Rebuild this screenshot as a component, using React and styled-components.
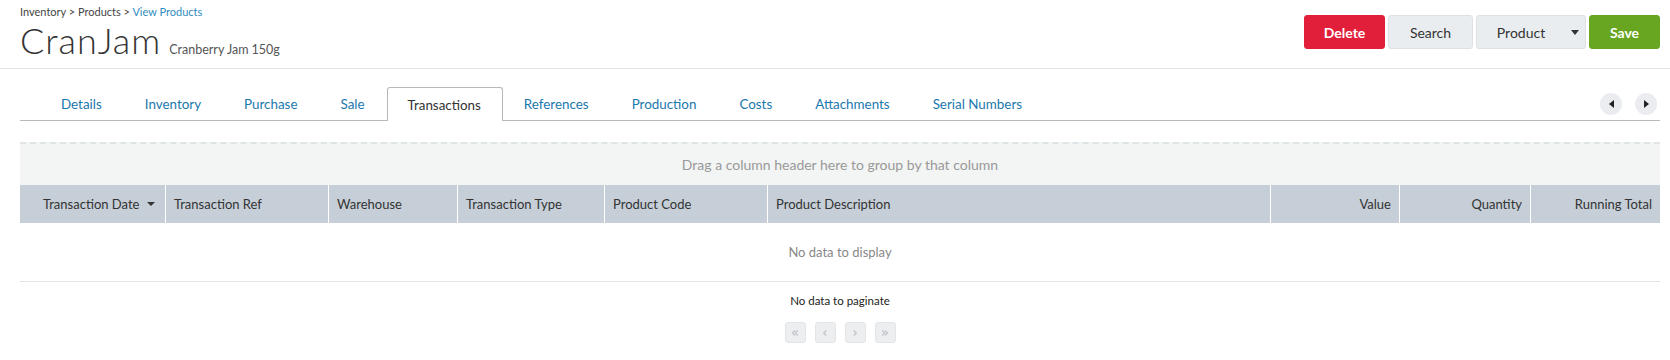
import React from "react";
import styled, { createGlobalStyle } from "styled-components";

const Global = createGlobalStyle`
  html, body { margin: 0; padding: 0; background: #fff; }
  body { font-family: Lato, "Open Sans", Arial, sans-serif; color: #333; }
  * { box-sizing: border-box; }
`;

const Header = styled.header`
  display: flex;
  justify-content: space-between;
  height: 69px;
  padding: 0 10px 0 20px;
  border-bottom: 1px solid #e0e5e9;
`;

const TitleBlock = styled.div`
  display: flex;
  flex-direction: column;
`;

const Crumbs = styled.div`
  margin-top: 5px;
  font-size: 11px;
  line-height: 14px;
  color: #444;
`;

const CrumbLink = styled.span`
  color: ${(p) => (p.$active ? "#2f8cc0" : "#444")};
`;

const TitleRow = styled.div`
  display: flex;
  align-items: baseline;
  gap: 8px;
  margin-top: 1px;
`;

const Title = styled.h1`
  margin: 0;
  font-size: 36px;
  font-weight: 300;
  line-height: 40px;
  color: #333;
  letter-spacing: 1px;
`;

const Subtitle = styled.span`
  font-size: 12.5px;
  color: #555;
`;

const Actions = styled.div`
  display: flex;
  gap: 3px;
  margin-top: 15px;
  height: 34px;
`;

const variants = {
  danger: { bg: "#e11f3b", border: "#e11f3b", color: "#fff", weight: 700 },
  success: { bg: "#68a520", border: "#68a520", color: "#fff", weight: 700 },
  default: { bg: "#eaedf0", border: "#dde1e5", color: "#333", weight: 400 },
};

const Button = styled.button`
  display: flex;
  align-items: center;
  justify-content: center;
  gap: 26px;
  height: 34px;
  width: ${(p) => p.$w}px;
  padding: 0;
  border-radius: 3px;
  border: 1px solid ${(p) => variants[p.$variant].border};
  background: ${(p) => variants[p.$variant].bg};
  color: ${(p) => variants[p.$variant].color};
  font-family: inherit;
  font-size: 14px;
  font-weight: ${(p) => variants[p.$variant].weight};
`;

const ButtonLabel = styled.span`
  margin-left: ${(p) => p.$shift || 0}px;
`;

const Caret = styled.span`
  width: 0;
  height: 0;
  border-left: 4px solid transparent;
  border-right: 4px solid transparent;
  border-top: 5px solid #333;
`;

const Main = styled.main`
  padding: 19px 10px 0 20px;
`;

const TabBar = styled.div`
  display: flex;
  align-items: flex-end;
  height: 33px;
  border-bottom: 1px solid #b8b8b8;
  padding-left: 20px;
`;

const Tab = styled.div`
  padding: 0 21px 0 20px;
  display: flex;
  align-items: center;
  font-size: 13.4px;
  color: ${(p) => (p.$active ? "#333" : "#1b78ad")};
  background: ${(p) => (p.$active ? "#fff" : "transparent")};
  border: 1px solid ${(p) => (p.$active ? "#b8b8b8" : "transparent")};
  border-bottom: none;
  border-radius: 3px 3px 0 0;
  margin-bottom: ${(p) => (p.$active ? "-1px" : "0")};
  height: ${(p) => (p.$active ? "34px" : "33px")};
`;

const Scrollers = styled.div`
  margin-left: auto;
  align-self: center;
  display: flex;
  gap: 13px;
  padding-right: 3px;
`;

const RoundBtn = styled.div`
  width: 22px;
  height: 22px;
  border-radius: 50%;
  background: #eaecef;
  display: flex;
  align-items: center;
  justify-content: center;
`;

const Tri = styled.span`
  width: 0;
  height: 0;
  border-top: 4px solid transparent;
  border-bottom: 4px solid transparent;
  ${(p) => (p.$dir === "left" ? "border-right: 5px solid #222;" : "border-left: 5px solid #222;")}
`;

const Grid = styled.div`
  margin-top: 21px;
`;

const GroupPanel = styled.div`
  height: 43px;
  border-top: 2px dashed #dfe4e7;
  background: #f3f4f4;
  display: flex;
  align-items: center;
  justify-content: center;
  font-size: 14px;
  color: #999;
`;

const cols = "145px 163px 129px 147px 163px 503px 129px 131px 130px";

const HeadRow = styled.div`
  display: grid;
  grid-template-columns: ${cols};
  height: 38px;
  background: #c6cfd7;
`;

const HeadCell = styled.div`
  display: flex;
  align-items: center;
  justify-content: ${(p) => (p.$right ? "flex-end" : "flex-start")};
  gap: 8px;
  padding: 0 8px 0 ${(p) => (p.$indent ? 22 : 8)}px;
  font-size: 13px;
  color: #333;
  white-space: nowrap;
  border-left: 1px solid ${(p) => (p.$first ? "transparent" : "#fff")};
`;

const SortCaret = styled.span`
  width: 0;
  height: 0;
  border-left: 4px solid transparent;
  border-right: 4px solid transparent;
  border-top: 4px solid #333;
`;

const EmptyRow = styled.div`
  height: 59px;
  border-bottom: 1px solid #dfe4e8;
  display: flex;
  align-items: center;
  justify-content: center;
  font-size: 13px;
  color: #888;
`;

const Pager = styled.div`
  display: flex;
  flex-direction: column;
  align-items: center;
`;

const PagerText = styled.div`
  margin-top: 12px;
  font-size: 11.5px;
  line-height: 14px;
  color: #222;
`;

const PagerButtons = styled.div`
  display: flex;
  gap: 9px;
  margin-top: 14px;
`;

const PageBtn = styled.div`
  width: 21px;
  height: 21px;
  border-radius: 3px;
  background: #eceef0;
  border: 1px solid #e2e5e8;
  display: flex;
  align-items: center;
  justify-content: center;
`;

const Chevron = ({ d }) => (
  <svg width="10" height="10" viewBox="0 0 10 10" fill="none" stroke="#bfc4c9" strokeWidth="1.2">
    <path d={d} />
  </svg>
);

const tabs = [
  "Details",
  "Inventory",
  "Purchase",
  "Sale",
  "Transactions",
  "References",
  "Production",
  "Costs",
  "Attachments",
  "Serial Numbers",
];

const headers = [
  { label: "Transaction Date", indent: true, sort: true },
  { label: "Transaction Ref" },
  { label: "Warehouse" },
  { label: "Transaction Type" },
  { label: "Product Code" },
  { label: "Product Description" },
  { label: "Value", right: true },
  { label: "Quantity", right: true },
  { label: "Running Total", right: true },
];

export default function App() {
  return (
    <>
      <Global />
      <Header>
        <TitleBlock>
          <Crumbs>
            <CrumbLink>Inventory</CrumbLink> &gt; <CrumbLink>Products</CrumbLink> &gt;{" "}
            <CrumbLink $active>View Products</CrumbLink>
          </Crumbs>
          <TitleRow>
            <Title>CranJam</Title>
            <Subtitle>Cranberry Jam 150g</Subtitle>
          </TitleRow>
        </TitleBlock>
        <Actions>
          <Button $variant="danger" $w={81}>Delete</Button>
          <Button $variant="default" $w={85}>Search</Button>
          <Button $variant="default" $w={110}>
            <ButtonLabel $shift={14}>Product</ButtonLabel>
            <Caret />
          </Button>
          <Button $variant="success" $w={71}>Save</Button>
        </Actions>
      </Header>
      <Main>
        <TabBar>
          {tabs.map((t) => (
            <Tab key={t} $active={t === "Transactions"}>
              {t}
            </Tab>
          ))}
          <Scrollers>
            <RoundBtn>
              <Tri $dir="left" />
            </RoundBtn>
            <RoundBtn>
              <Tri $dir="right" />
            </RoundBtn>
          </Scrollers>
        </TabBar>
        <Grid>
          <GroupPanel>Drag a column header here to group by that column</GroupPanel>
          <HeadRow>
            {headers.map((h, i) => (
              <HeadCell key={h.label} $first={i === 0} $indent={h.indent} $right={h.right}>
                {h.label}
                {h.sort && <SortCaret />}
              </HeadCell>
            ))}
          </HeadRow>
          <EmptyRow>No data to display</EmptyRow>
        </Grid>
        <Pager>
          <PagerText>No data to paginate</PagerText>
          <PagerButtons>
            <PageBtn><Chevron d="M5 2.5 2.5 5 5 7.5M7.8 2.5 5.3 5 7.8 7.5" /></PageBtn>
            <PageBtn><Chevron d="M6.2 2.5 3.7 5 6.2 7.5" /></PageBtn>
            <PageBtn><Chevron d="M3.8 2.5 6.3 5 3.8 7.5" /></PageBtn>
            <PageBtn><Chevron d="M2.2 2.5 4.7 5 2.2 7.5M5 2.5 7.5 5 5 7.5" /></PageBtn>
          </PagerButtons>
        </Pager>
      </Main>
    </>
  );
}
